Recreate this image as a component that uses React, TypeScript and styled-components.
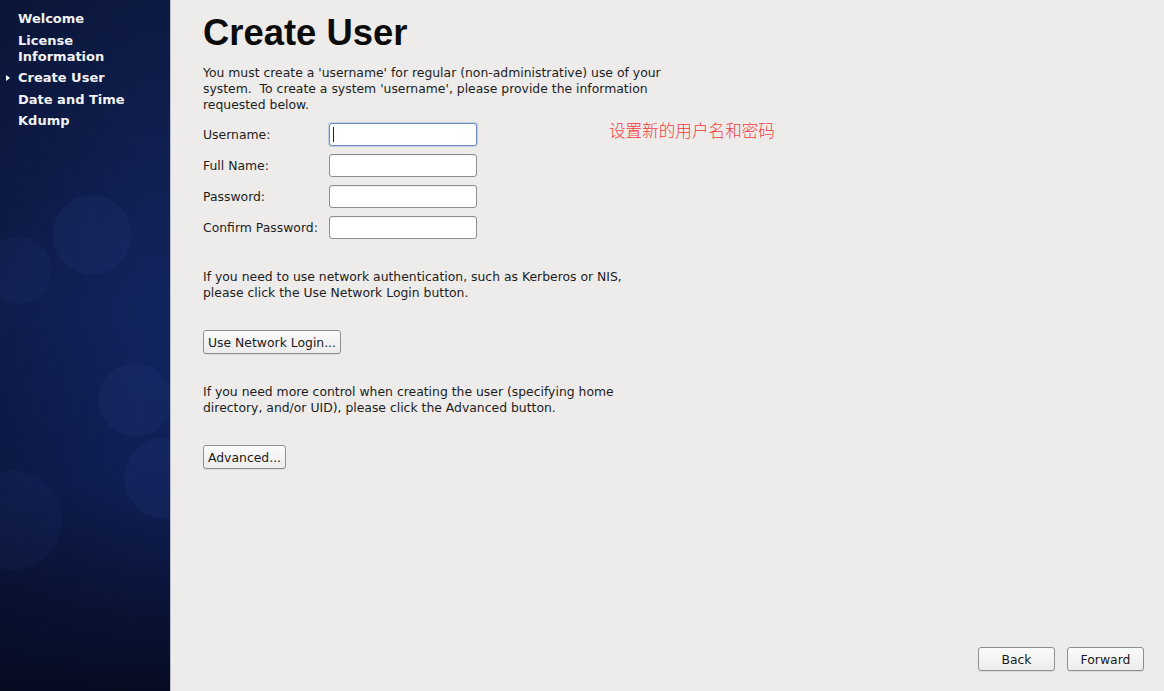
import React from "react";
import styled, { createGlobalStyle } from "styled-components";

const GlobalStyle = createGlobalStyle`
  html, body {
    margin: 0;
    padding: 0;
    height: 100%;
    overflow: hidden;
  }
  body {
    font-family: "DejaVu Sans", sans-serif;
    background: #edeceb;
  }
  #root {
    height: 100%;
  }
`;

const steps = [
  { label: "Welcome" },
  { label: "License\nInformation" },
  { label: "Create User", current: true },
  { label: "Date and Time" },
  { label: "Kdump" },
];

const fields = [
  { label: "Username:", focused: true },
  { label: "Full Name:" },
  { label: "Password:" },
  { label: "Confirm Password:" },
];

const App = () => {
  return (
    <Screen>
      <GlobalStyle />
      <Sidebar>
        <StepList>
          {steps.map((step) => (
            <Step key={step.label}>
              <Marker>{step.current && <Arrow />}</Marker>
              <StepLabel>{step.label}</StepLabel>
            </Step>
          ))}
        </StepList>
      </Sidebar>
      <Main>
        <Title>Create User</Title>
        <Text>
          You must create a 'username' for regular (non-administrative) use of your
          <br />
          system.&nbsp; To create a system 'username', please provide the information
          <br />
          requested below.
        </Text>
        <FormRow>
          <FormGrid>
            {fields.map((f) => (
              <React.Fragment key={f.label}>
                <Label>{f.label}</Label>
                <Field $focused={!!f.focused}>{f.focused && <Caret />}</Field>
              </React.Fragment>
            ))}
          </FormGrid>
          <Note>设置新的用户名和密码</Note>
        </FormRow>
        <Text $top={30}>
          If you need to use network authentication, such as Kerberos or NIS,
          <br />
          please click the Use Network Login button.
        </Text>
        <ButtonRow>
          <Button>Use Network Login...</Button>
        </ButtonRow>
        <Text $top={30}>
          If you need more control when creating the user (specifying home
          <br />
          directory, and/or UID), please click the Advanced button.
        </Text>
        <ButtonRow>
          <Button>Advanced...</Button>
        </ButtonRow>
        <Footer>
          <Button $width={77}>Back</Button>
          <Button $width={77}>Forward</Button>
        </Footer>
      </Main>
    </Screen>
  );
};

const Screen = styled.div`
  display: flex;
  height: 100vh;
  width: 100vw;
`;

const Sidebar = styled.nav`
  width: 170px;
  flex-shrink: 0;
  border-right: 1px solid #b9bfcc;
  background:
    radial-gradient(circle at 92px 235px, rgba(45, 65, 135, 0.16) 0 39px, transparent 40px),
    radial-gradient(circle at 18px 270px, rgba(45, 65, 135, 0.12) 0 33px, transparent 34px),
    radial-gradient(circle at 135px 400px, rgba(45, 65, 135, 0.15) 0 36px, transparent 37px),
    radial-gradient(circle at 165px 478px, rgba(45, 65, 135, 0.15) 0 40px, transparent 41px),
    radial-gradient(circle at 12px 520px, rgba(45, 65, 135, 0.1) 0 49px, transparent 50px),
    linear-gradient(to right, rgba(5, 10, 30, 0.3), rgba(5, 10, 30, 0) 85%),
    linear-gradient(to bottom, #0d1a42 0%, #12245e 45%, #0f1f55 70%, #070c22 100%);
`;

const StepList = styled.ul`
  list-style: none;
  margin: 0;
  padding: 11px 0 0 5px;
  display: flex;
  flex-direction: column;
  gap: 5.5px;
`;

const Step = styled.li`
  display: flex;
  align-items: center;
`;

const Marker = styled.span`
  width: 13px;
  display: flex;
  align-items: center;
`;

const Arrow = styled.span`
  width: 0;
  height: 0;
  border-top: 3px solid transparent;
  border-bottom: 3px solid transparent;
  border-left: 4px solid #ffffff;
  margin-left: 1px;
`;

const StepLabel = styled.span`
  font-family: "DejaVu Sans", sans-serif;
  font-weight: 700;
  font-size: 13px;
  line-height: 16px;
  color: #f2f2f4;
  white-space: pre-line;
`;

const Main = styled.main`
  flex: 1;
  display: flex;
  flex-direction: column;
  padding: 12px 20px 20px 32px;
  color: #1a1a1a;
  font-size: 12.4px;
`;

const Title = styled.h1`
  margin: 0;
  font-family: "Liberation Sans", Arial, sans-serif;
  font-weight: 700;
  font-size: 36.4px;
  line-height: 41px;
  color: #0c0c0c;
`;

const Text = styled.p<{ $top?: number }>`
  margin: ${(p) => p.$top ?? 12}px 0 0;
  font-size: 12.4px;
  line-height: 16px;
  color: #1c1c1c;
`;

const FormRow = styled.div`
  display: flex;
  align-items: flex-start;
  margin-top: 10px;
`;

const FormGrid = styled.div`
  display: grid;
  grid-template-columns: 126px 148px;
  row-gap: 8px;
  align-items: center;
`;

const Label = styled.span`
  font-size: 12.4px;
  line-height: 16px;
  color: #1c1c1c;
`;

const Field = styled.div<{ $focused: boolean }>`
  box-sizing: border-box;
  height: 23px;
  background: #ffffff;
  border: 1px solid ${(p) => (p.$focused ? "#6f8fc4" : "#8e8e8e")};
  border-radius: 3px;
  box-shadow: ${(p) =>
    p.$focused ? "0 0 0 1px rgba(140, 170, 215, 0.45)" : "inset 0 1px 1px rgba(0,0,0,0.06)"};
  display: flex;
  align-items: center;
  padding-left: 3px;
`;

const Caret = styled.span`
  width: 1px;
  height: 15px;
  background: #222;
`;

const Note = styled.span`
  margin-left: 132px;
  margin-top: -4px;
  font-family: "Noto Sans CJK SC", sans-serif;
  font-weight: 300;
  font-size: 16.6px;
  line-height: 22px;
  color: #f23c3c;
`;

const ButtonRow = styled.div`
  display: flex;
  margin-top: 29px;
`;

const Button = styled.button<{ $width?: number }>`
  box-sizing: border-box;
  height: 24px;
  ${(p) => (p.$width ? `width: ${p.$width}px;` : "padding: 0 4px;")}
  font-family: "DejaVu Sans", sans-serif;
  font-size: 12.4px;
  color: #1a1a1a;
  background: linear-gradient(to bottom, #fbfbfb, #ececec);
  border: 1px solid #8f8f8f;
  border-radius: 3px;
  box-shadow: 0 1px 0 rgba(0, 0, 0, 0.08);
`;

const Footer = styled.div`
  margin-top: auto;
  display: flex;
  justify-content: flex-end;
  gap: 12px;
`;

export default App;
